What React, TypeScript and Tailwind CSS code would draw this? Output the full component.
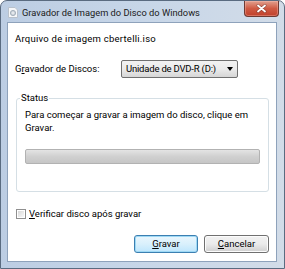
import React from 'react';

const font = { fontFamily: 'Roboto, "Noto Sans", sans-serif' };

const DiscIcon: React.FC = () => (
  <svg width="10" height="11" viewBox="0 0 10 11">
    <path d="M0.5 0.5 H7 L9.5 3 V10.5 H0.5 Z" fill="#f6f7f9" stroke="#b9c1cb" />
    <circle cx="5" cy="6" r="2.6" fill="#d0d6dd" stroke="#97a3b0" strokeWidth="0.8" />
    <circle cx="5" cy="6" r="0.8" fill="#fff" />
  </svg>
);

const App: React.FC = () => {
  return (
    <div className="w-[285px] h-[269px] bg-white" style={font}>
      <div className="w-full h-full flex flex-col rounded-t-[7px] border border-[#5a6b80] bg-gradient-to-r from-[#bccde3] via-[#c7d6e8] to-[#d2dce8]">
        {/* Title bar */}
        <div className="h-[21px] flex items-start shrink-0">
          <div className="pl-[7px] pt-[6px]">
            <DiscIcon />
          </div>
          <span className="ml-[4px] mt-[5px] text-[9.3px] leading-[13px] text-[#1a1a1a] whitespace-nowrap">
            Gravador de Imagem do Disco do Windows
          </span>
          <div className="ml-auto mr-[5px] w-[35px] h-[16px] rounded-b-[4px] border border-t-0 border-[#6e3a33] bg-gradient-to-b from-[#e0a08f] via-[#cf5a43] to-[#c0402b] shadow-[inset_0_0_0_1px_rgba(255,200,190,0.35)] flex items-center justify-center">
            <svg width="11" height="9" viewBox="0 0 11 9">
              <path d="M2 1.5 L9 7.5 M9 1.5 L2 7.5" stroke="#5a2a24" strokeWidth="3" strokeLinecap="round" opacity="0.5" />
              <path d="M2 1.5 L9 7.5 M9 1.5 L2 7.5" stroke="#fff" strokeWidth="1.8" strokeLinecap="round" />
            </svg>
          </div>
        </div>

        {/* Client area */}
        <div className="ml-[6px] w-[270px] h-[240px] border border-[#8ea2bb] bg-white text-[9.5px] leading-[12px] text-black flex flex-col px-[7px] pt-[10px] whitespace-nowrap">
          <div className="h-[12px] tracking-[0.25px]">Arquivo de imagem cbertelli.iso</div>

          <div className="mt-[15px] flex items-center">
            <span className="w-[106px]">
              G<span className="underline">r</span>avador de Discos:
            </span>
            <div className="w-[117px] h-[18px] rounded-[2px] border border-[#707070] bg-gradient-to-b from-[#f2f2f2] via-[#ebebeb] to-[#d6d6d6] flex items-center pl-[4px] pr-[4px]">
              <span className="tracking-[-0.2px]">Unidade de DVD-R (D:)</span>
              <svg className="ml-auto" width="6" height="4" viewBox="0 0 6 4">
                <path d="M0 0 H6 L3 4 Z" fill="#000" />
              </svg>
            </div>
          </div>

          {/* Status group */}
          <div className="relative mt-[20px] ml-[1px] w-[253px] h-[94px] rounded-[3px] border border-[#d5dfe5] pl-[8px] pt-[9px] whitespace-normal">
            <span className="absolute -top-[7px] left-[3px] px-[1px] bg-white">Status</span>
            <p className="leading-[13px] w-[225px]">
              Para começar a gravar a imagem do disco, clique em Gravar.
            </p>
            <div className="mt-[15px] w-[235px] h-[15px] rounded-[2px] border border-[#b2b2b2] bg-gradient-to-b from-[#e4e4e4] via-[#d0d0d0] to-[#c6c6c6]" />
          </div>

          <div className="mt-[16px] ml-[1px] flex items-center">
            <div className="w-[10px] h-[10px] border border-[#8f8f8f] bg-white p-[1px]">
              <div className="w-full h-full bg-gradient-to-br from-[#d8d8d8] to-[#f8f8f8]" />
            </div>
            <span className="ml-[3px]">
              <span className="underline">V</span>erificar disco após gravar
            </span>
          </div>

          <div className="mt-[15px] flex justify-end gap-[6px]">
            <div className="w-[64px] h-[18px] rounded-[3px] border border-[#3c7fb1] bg-gradient-to-b from-[#eaf6fd] via-[#d9f0fc] to-[#bee6fd] shadow-[inset_0_0_0_1px_#9ed9f5] flex items-center justify-center">
              <span>
                <span className="underline">G</span>ravar
              </span>
            </div>
            <div className="w-[65px] h-[18px] rounded-[3px] border border-[#707070] bg-gradient-to-b from-[#f2f2f2] via-[#ebebeb] to-[#cfcfcf] shadow-[inset_0_0_0_1px_#fcfcfc] flex items-center justify-center">
              <span>
                <span className="underline">C</span>ancelar
              </span>
            </div>
          </div>
        </div>
      </div>
    </div>
  );
};

export default App;
